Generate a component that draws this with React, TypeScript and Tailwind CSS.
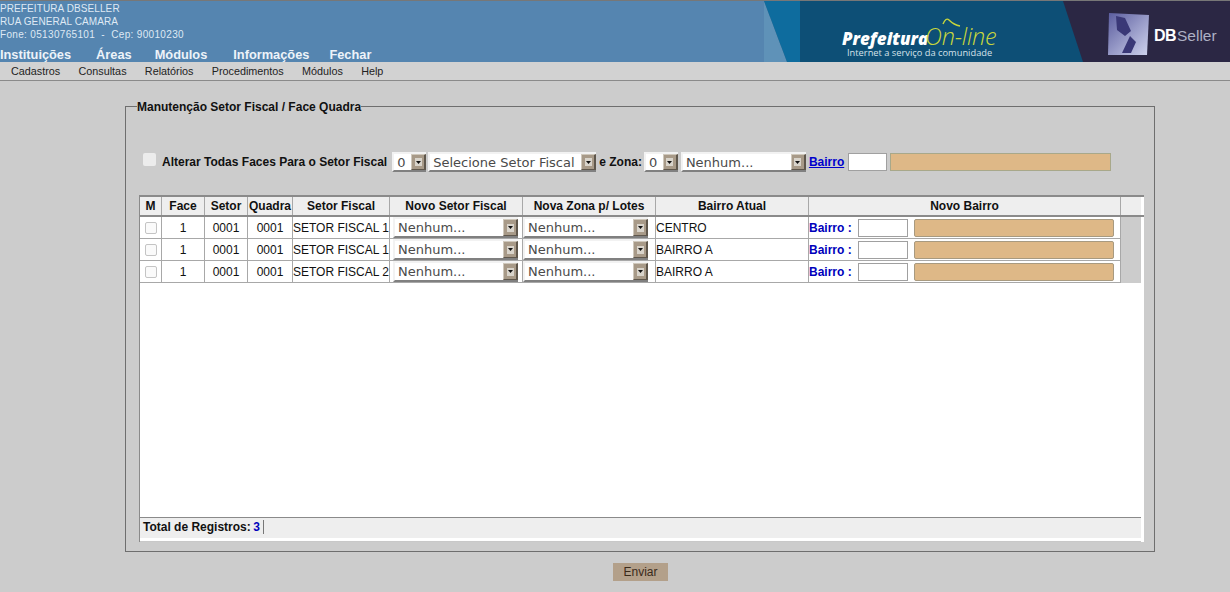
import React from "react";

const sans = "font-['Liberation_Sans',Arial,sans-serif]";

function FakeSelect({ text, w, h = 20 }: { text: string; w: string; h?: number }) {
  return (
    <div className={`${w} flex shrink-0 items-stretch bg-white border-t-2 border-l-2 border-t-[#f2f2f2] border-l-[#f2f2f2] border-b-2 border-b-[#808080] font-['DejaVu_Sans',sans-serif] text-[13px] font-normal leading-none text-[#4a4a4a]`} style={{ height: h }}>
      <span className="flex flex-1 items-center overflow-hidden whitespace-nowrap pl-[3px]">{text}</span>
      <span className="flex w-[15px] items-center justify-center border border-r-2 border-t-[#cfc8bc] border-l-[#cfc8bc] border-r-[#5f574c] border-b-[#5f574c] bg-[#a89a88]">
        <span className="flex h-[8px] w-[7px] items-center justify-center bg-[#d9d4cb]">
          <svg width="5" height="3" viewBox="0 0 5 3"><path d="M0 0h5L2.5 3z" fill="#111" /></svg>
        </span>
      </span>
    </div>
  );
}

const cols = "grid grid-cols-[22px_43px_43px_45px_97px_133px_133px_153px_312px_20px]";

function Head({ children, last }: { children?: React.ReactNode; last?: boolean }) {
  return (
    <div className={`flex items-center justify-center whitespace-nowrap bg-[#eeeeee] ${last ? "" : "border-r border-r-[#a8a8a8]"}`}>{children}</div>
  );
}

function Cell({ children, center, cls = "" }: { children?: React.ReactNode; center?: boolean; cls?: string }) {
  return (
    <div className={`flex items-center overflow-hidden whitespace-nowrap border-r border-b border-r-[#a8a8a8] border-b-[#a8a8a8] ${center ? "justify-center" : ""} ${cls}`}>{children}</div>
  );
}

function Row({ fiscal, bairro }: { fiscal: string; bairro: string }) {
  return (
    <div className={`${cols} h-[22px] text-[12px] text-[#111]`}>
      <Cell center><span className="h-[12px] w-[12px] rounded-[2px] border border-[#c4c4c4] bg-[#fafafa]" /></Cell>
      <Cell center>1</Cell>
      <Cell center>0001</Cell>
      <Cell center>0001</Cell>
      <Cell>{fiscal}</Cell>
      <Cell cls="pl-[3px]"><FakeSelect text="Nenhum..." w="w-[125px]" h={21} /></Cell>
      <Cell><FakeSelect text="Nenhum..." w="w-[125px]" h={21} /></Cell>
      <Cell>{bairro}</Cell>
      <Cell>
        <span className="w-[49px] font-bold text-[#0000bb]">Bairro :</span>
        <span className="h-[18px] w-[50px] border border-[#a0a0a0] bg-white" />
        <span className="ml-[6px] h-[18px] w-[200px] rounded-[2px] border border-[#a89a80] bg-[#deb887]" />
      </Cell>
      <div className="bg-[#cccccc]" />
    </div>
  );
}

export default function App() {
  return (
    <div className={`${sans} h-[592px] w-[1230px] overflow-hidden bg-[#cccccc] text-[#111]`}>
      <header className="flex h-[62px] border-t border-t-[#777] bg-[#5585b0]">
        <div className="flex flex-1 flex-col pt-px text-[10px] leading-[13px] tracking-[0.1px] text-[#dfe9f4]">
          <div>PREFEITURA DBSELLER</div>
          <div>RUA GENERAL CAMARA</div>
          <div className="whitespace-pre tracking-[0.33px]">Fone: 05130765101  -  Cep: 90010230</div>
          <nav className="mt-[6px] flex text-[12.8px] font-bold leading-[15px] tracking-normal text-[#edf3f9]">
            <span className="mr-[25px]">Instituições</span>
            <span className="mr-[23px]">Áreas</span>
            <span className="mr-[26px]">Módulos</span>
            <span className="mr-[20px]">Informações</span>
            <span>Fechar</span>
          </nav>
        </div>
        <svg width="466" height="61" viewBox="0 0 466 61" className="shrink-0">
          <rect width="466" height="61" fill="#0d4f76" />
          <path d="M0 0H36V61H23z" fill="#0e6c9e" />
          <path d="M0 0L23 61H0z" fill="#5f92b8" />
          <path d="M299 0H466V61H319z" fill="#2b2744" />
          <text x="78" y="44" fontFamily="'Open Sans',sans-serif" fontStyle="italic" fontWeight="800" fontSize="17" fill="#fff">Prefeitura</text>
          <text x="161" y="44" fontFamily="'Open Sans',sans-serif" fontStyle="italic" fontWeight="300" fontSize="23.5" letterSpacing="-0.2" fill="#c8d63c">On-line</text>
          <path d="M179 23q3-7 6-4 5 5 11 6" fill="none" stroke="#c8d63c" strokeWidth="1.4" />
          <text x="83" y="55" fontFamily="'Open Sans',sans-serif" fontSize="9.3" fill="#d5e2ea">Internet a serviço da comunidade</text>
          <defs>
            <linearGradient id="g" x1="0" y1="0" x2="1" y2="1"><stop offset="0" stopColor="#5a5c9e" /><stop offset="1" stopColor="#d0d4ee" /></linearGradient>
          </defs>
          <path d="M345 12L385 14L383 54L344 54z" fill="url(#g)" />
          <path d="M352 15l9 2 6 13-6 5-8-6zM358 52l8-17 6 6-5 11z" fill="#3a3877" />
          <text x="390" y="40" fontFamily="'Liberation Sans',sans-serif" fontWeight="700" fontSize="16" letterSpacing="-0.5" fill="#fff">DB</text>
          <text x="413" y="40" fontFamily="'Liberation Sans',sans-serif" fontSize="15.5" fill="#aeb1c4">Seller</text>
        </svg>
      </header>

      <div className="flex h-[19px] items-center gap-[18.3px] border-b border-b-[#8a8a8a] bg-[#d2d2d2] pl-[11px] text-[10.8px] text-[#222]">
        <span>Cadastros</span><span>Consultas</span><span>Relatórios</span><span>Procedimentos</span><span>Módulos</span><span>Help</span>
      </div>

      <main className="flex flex-col items-start pl-[125px] pt-[16px]">
        <fieldset className="h-[455px] w-[1029px] border border-[#6e6e6e] pl-[13px] pr-[10px]">
          <legend className="-ml-[2px] pt-[2px] text-[12px] font-bold leading-[16px]">Manutenção Setor Fiscal / Face Quadra</legend>

          <div className="mt-[37px] flex h-[20px] items-center text-[12px] font-bold">
            <span className="ml-[4px] mr-[6px] -mt-[6px] h-[13px] w-[13px] rounded-[2px] bg-[#ececec]" />
            <span className="mr-[5px]">Alterar Todas Faces Para o Setor Fiscal</span>
            <FakeSelect text="0" w="w-[34px]" />
            <span className="w-[2px]" />
            <FakeSelect text="Selecione Setor Fiscal" w="w-[168px]" />
            <span className="ml-[3px] mr-[2px]">e Zona:</span>
            <FakeSelect text="0" w="w-[34px]" />
            <span className="w-[3px]" />
            <FakeSelect text="Nenhum..." w="w-[125px]" />
            <span className="ml-[3px] text-[#0000cc] underline">Bairro</span>
            <span className="ml-[4px] h-[18px] w-[39px] border border-[#a0a0a0] bg-white" />
            <span className="ml-[3px] h-[18px] w-[221px] border border-[#a8a88a] bg-[#deb887]" />
          </div>

          <div className="mt-[23px] flex h-[347px] w-[1005px] flex-col border-t-2 border-l border-t-[#8a8a8a] border-l-[#8a8a8a] bg-white">
            <div className={`${cols} h-[20px] border-b-2 border-b-[#8a8a8a] text-[12px] font-bold text-[#111]`}>
              <Head>M</Head><Head>Face</Head><Head>Setor</Head><Head>Quadra</Head><Head>Setor Fiscal</Head><Head>Novo Setor Fiscal</Head><Head>Nova Zona p/ Lotes</Head><Head>Bairro Atual</Head><Head>Novo Bairro</Head><Head last />
            </div>
            <Row fiscal="SETOR FISCAL 1" bairro="CENTRO" />
            <Row fiscal="SETOR FISCAL 1" bairro="BAIRRO A" />
            <Row fiscal="SETOR FISCAL 2" bairro="BAIRRO A" />
            <div className="flex-1" />
            <div className="flex h-[21px] w-[1001px] items-center border-t border-t-[#8a8a8a] bg-[#eeeeee] pb-[2px] text-[12px] font-bold">
              <span className="ml-[3px] border-r border-r-[#777] pr-[3px] leading-[14px]">Total de Registros: <span className="-ml-px text-[#0000bb]">3</span></span>
            </div>
            <div className="h-[4px] w-[1001px] border-b border-b-[#c8c8c8] bg-white" />
          </div>
        </fieldset>
        <button className="ml-[488px] mt-[11px] h-[18px] w-[55px] bg-[#b3a08a] text-[12px] leading-none text-[#3a2a1a]">Enviar</button>
      </main>
    </div>
  );
}
